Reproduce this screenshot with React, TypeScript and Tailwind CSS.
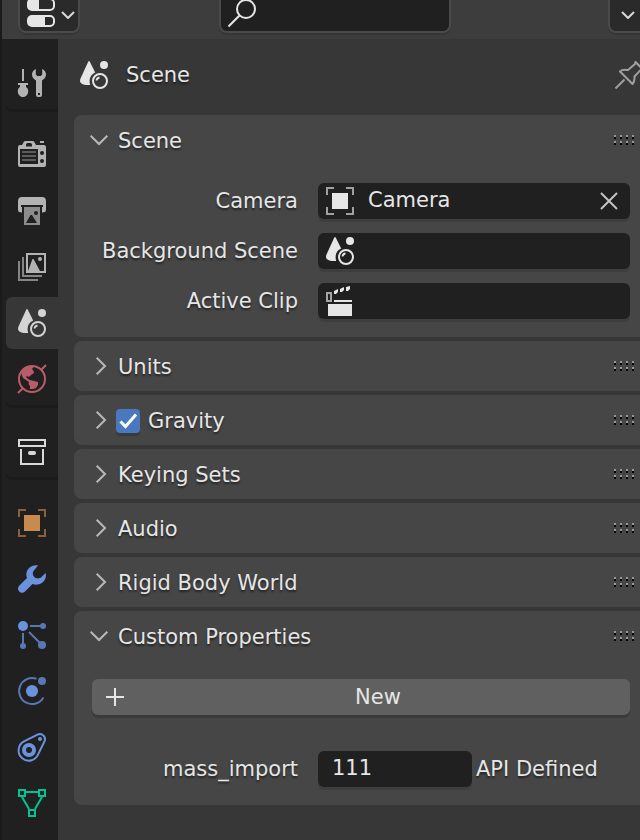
import { useState, type ReactNode } from "react";

const iconBox = "block h-7 w-7 shrink-0 overflow-visible";

function SceneIcon() {
  return (
    <svg viewBox="0 0 28 28" className={iconBox} fill="currentColor" aria-hidden="true">
      <path d="M8.300 0.500 Q9 -0.300 9.700 0.500 L15.200 11.400 C11.400 13 9.600 16 9.600 20 Q9.600 22 10.200 24 C6.500 24.300 3.500 24 1.500 22.600 C-0.300 21.200 -0.200 19.200 0.500 17.500 Z" />
      <circle cx="24" cy="4" r="4" />
      <circle cx="20" cy="20" r="7" fill="none" stroke="currentColor" strokeWidth="2" />
      <path d="M16.500 19.500 A3.500 3.500 0 0 1 19.500 16.500" fill="none" stroke="currentColor" strokeWidth="1.800" />
    </svg>
  );
}

function ToolIcon() {
  return (
    <svg viewBox="0 0 28 28" className={iconBox} fill="#b3b3b3" aria-hidden="true">
      <path d="M4 0h2v12h-2z M0 14h10v2h-2v2c1.600 1 2.200 2.400 2.200 4.200c0 3.200-2.200 5.800-5.200 5.800s-5.200-2.600-5.200-5.800c0-1.800 0.600-3.200 2.200-4.200v-2h-2z" />
      <path
        fillRule="evenodd"
        d="M17.800 0 C15.400 1 14 3.200 14 5.600 C14 8.200 15.600 10.400 18 11.400 V26 Q18 28 20 28 H22 Q24 28 24 26 V11.400 C26.400 10.400 28 8.200 28 5.600 C28 3.200 26.600 1 24.200 0 V5.400 L22.800 7 H19.200 L17.800 5.400 Z M20 24h2v2h-2z"
      />
    </svg>
  );
}

function RenderIcon() {
  return (
    <svg viewBox="0 0 28 28" className={iconBox} aria-hidden="true">
      <path
        fill="#b3b3b3"
        fillRule="evenodd"
        d="M0 6 Q0 4 2 4 H4 L6 0.500 Q6.500 0 7.500 0 H14.500 Q15.500 0 16 0.500 L18 4 H26 Q28 4 28 6 V24 Q28 26 26 26 H2 Q0 26 0 24 Z M9 2 L8 3.500 V5.500 H14 V3.500 L13 2 Z M2 8 V23 H20 V8 Z"
      />
      <path fill="#b3b3b3" d="M22 0h4v2h-4z" />
      <path fill="#5c5c5c" d="M4 10h14v2h-14z M4 14h14v2h-14z M4 18h14v2h-14z" />
      <circle cx="24" cy="12" r="2" fill="#202020" />
      <circle cx="24" cy="20" r="2" fill="#202020" />
    </svg>
  );
}

function OutputIcon() {
  return (
    <svg viewBox="0 0 28 28" className={iconBox} aria-hidden="true">
      <path
        fill="#b3b3b3"
        d="M4 0 H24 Q28 0 28 4 V13 Q28 15.500 24 15.500 V10 H25 V8 H3 V10 H4 V15.500 Q0 15.500 0 13 V4 Q0 0 4 0 Z"
      />
      <path
        fill="#8c8c8c"
        fillRule="evenodd"
        d="M6 10h16v18h-16z M8 26 H19 L14 18 H12.500 Z"
      />
      <circle cx="18" cy="16" r="2" fill="#202020" />
    </svg>
  );
}

function ViewLayerIcon() {
  return (
    <svg viewBox="0 0 28 28" className={iconBox} aria-hidden="true">
      <path d="M9 1h18v18h-18z" fill="none" stroke="#b3b3b3" strokeWidth="2" />
      <path d="M10 18 L14.500 6 H15.500 L22 18 Z" fill="#b3b3b3" />
      <circle cx="22" cy="6" r="2" fill="#b3b3b3" />
      <path d="M5 4v19h19 M1 8v19h19" fill="none" stroke="#858585" strokeWidth="2" />
    </svg>
  );
}

function WorldIcon() {
  return (
    <svg viewBox="0 0 28 28" className={iconBox} aria-hidden="true">
      <circle cx="14" cy="14" r="13" fill="none" stroke="#b95c6a" strokeWidth="2" />
      <path d="M23.500 4.500 L28 0 M4.500 23.500 L0 28" stroke="#b95c6a" strokeWidth="2" />
      <path
        fill="#b95c6a"
        d="M6 4 C9 1 13 1 15.500 2 L14 4 L15.500 6 L16 8 L13 10 L11 12 L9 11 L8 12 L10 14 L12 15 L16 16 L20 17 L20 20 L18 23 L15 24 L12 24 L12 21 L10.500 19 L11 17 L8 15 L5 13 L3 8 Z"
      />
    </svg>
  );
}

function CollectionIcon() {
  return (
    <svg viewBox="0 0 28 28" className={iconBox} aria-hidden="true">
      <path d="M1 3h26v6h-26z M3 12v15h22v-15" fill="none" stroke="#d9d9d9" strokeWidth="2" />
      <rect x="10" y="14" width="8" height="4" rx="2" fill="#d9d9d9" />
    </svg>
  );
}

function ObjectIcon({ square, corners }: { square: string; corners: string }) {
  return (
    <svg viewBox="0 0 28 28" className={iconBox} aria-hidden="true">
      <path d="M8 1h-7v7 M20 1h7v7 M1 20v7h7 M27 20v7h-7" fill="none" stroke={corners} strokeWidth="2" />
      <path d="M6 6h16v16h-16z" fill={square} />
    </svg>
  );
}

function ModifierIcon() {
  return (
    <svg viewBox="0 0 28 28" className={iconBox} aria-hidden="true">
      <path
        fill="#6b93dd"
        d="M20 0.500 C15 -0.500 9.500 2.500 8.500 8 C8.200 9.800 8.400 11.400 9 13 L1.200 20.800 C-0.400 22.400 -0.400 25 1.200 26.600 C2.800 28.200 5.400 28.200 7 26.600 L14.500 19 C19.500 21 25.500 18.500 27.400 13.500 C28 11.600 28.200 9.600 27.600 8 L23.500 12 C22 13.500 19.500 13.800 17.800 13 C15 11.600 14 8.500 15.500 6 Z"
      />
    </svg>
  );
}

function ParticlesIcon() {
  return (
    <svg viewBox="0 0 28 28" className={iconBox} aria-hidden="true">
      <path d="M12 5h12 M5 12v12 M11 11l13 13" stroke="#5877b4" strokeWidth="2" />
      <circle cx="5" cy="5" r="5" fill="#6b93dd" />
      <circle cx="25" cy="5" r="3" fill="#5877b4" />
      <circle cx="5" cy="25" r="3" fill="#5877b4" />
      <circle cx="24" cy="24" r="4" fill="#5877b4" />
    </svg>
  );
}

function PhysicsIcon() {
  return (
    <svg viewBox="0 0 28 28" className={iconBox} aria-hidden="true">
      <path d="M18.500 1.800 A13 13 0 1 0 25.400 20.500" fill="none" stroke="#5877b4" strokeWidth="2" />
      <circle cx="14" cy="14" r="6" fill="#6b93dd" />
      <circle cx="24" cy="4" r="4" fill="#5877b4" />
    </svg>
  );
}

function ConstraintIcon() {
  return (
    <svg viewBox="0 0 28 28" className={iconBox} aria-hidden="true">
      <path
        d="M6 8.400 L19.500 1.600 C23.500 -0.200 28 3.200 26.800 7.600 L20.500 20.500 A10.200 10.200 0 1 1 6 8.400 Z"
        fill="none"
        stroke="#6b93dd"
        strokeWidth="2"
      />
      <circle cx="11" cy="17" r="5" fill="none" stroke="#6b93dd" strokeWidth="4" />
      <circle cx="22" cy="6" r="2" fill="#6b93dd" />
    </svg>
  );
}

function MeshIcon() {
  return (
    <svg viewBox="0 0 28 28" className={iconBox} fill="none" stroke="#00c492" strokeWidth="2" aria-hidden="true">
      <path d="M1 1h6v6h-6z M21 1h6v6h-6z M11 21h6v6h-6z M8 3h12 M4 8l7 12 M24 8l-7 12" />
    </svg>
  );
}

function ClipIcon() {
  return (
    <svg viewBox="0 0 28 30" className="block h-[30px] w-7 shrink-0" aria-hidden="true">
      <path d="M1 7h4v8h-4z" fill="none" stroke="#a6a6a6" strokeWidth="2" />
      <path
        fill="#e6e6e6"
        d="M8 5l4-2v3l-2 2h-2z M14 3l4-2v3l-2 2h-2z M20 1l4-1v3l-2 2h-2z M8 14h18v2h-18z M2 18h24v12h-24z"
      />
    </svg>
  );
}

function PinIcon() {
  return (
    <svg viewBox="0 0 28 28" className={iconBox} fill="none" stroke="#a0a0a0" strokeWidth="2" strokeLinejoin="round" aria-hidden="true">
      <path d="M0.500 27.500 L9.500 18.500 M20.500 1 L27 7.500 L19.500 15.500 C19.500 18 20 20 17.500 23 L5 10.500 C7.500 8 10.500 9 13 9 L20 3 Z" />
    </svg>
  );
}

function Caret() {
  return (
    <svg viewBox="0 0 14 8" className="block h-2 w-3.5" fill="none" stroke="#d9d9d9" strokeWidth="2" aria-hidden="true">
      <path d="M1 1l6 6l6 -6" />
    </svg>
  );
}

function Grip() {
  const cells = [0, 6, 12, 18].flatMap((x) => [0, 6].map((y) => ({ x, y })));
  return (
    <svg viewBox="0 0 20 10" className="ml-auto block h-2.5 w-5 shrink-0" aria-hidden="true">
      {cells.map(({ x, y }) => (
        <g key={`${x}-${y}`}>
          <rect x={x} y={y} width="2" height="2" fill="#9a9a9a" />
          <rect x={x} y={y + 2} width="2" height="2" fill="#000" />
        </g>
      ))}
    </svg>
  );
}

const tabGroups: { name: string; icon: ReactNode }[][] = [
  [{ name: "Tool", icon: <ToolIcon /> }],
  [
    { name: "Render", icon: <RenderIcon /> },
    { name: "Output", icon: <OutputIcon /> },
    { name: "View Layer", icon: <ViewLayerIcon /> },
    { name: "Scene", icon: <SceneIcon /> },
    { name: "World", icon: <WorldIcon /> },
  ],
  [{ name: "Collection", icon: <CollectionIcon /> }],
  [
    { name: "Object", icon: <ObjectIcon square="#c98a50" corners="#8b603e" /> },
    { name: "Modifiers", icon: <ModifierIcon /> },
    { name: "Particles", icon: <ParticlesIcon /> },
    { name: "Physics", icon: <PhysicsIcon /> },
    { name: "Constraints", icon: <ConstraintIcon /> },
    { name: "Data", icon: <MeshIcon /> },
  ],
];

function Panel({
  title,
  leading,
  children,
}: {
  title: string;
  leading?: ReactNode;
  children?: ReactNode;
}) {
  const open = Boolean(children);
  return (
    <section className="rounded-l-lg bg-[#464646]">
      <div className="flex h-[50px] items-center pr-1.5 pl-4">
        <button
          type="button"
          aria-label={`Toggle ${title}`}
          aria-expanded={open}
          className={leading ? "mr-2" : "mr-2.5"}
        >
          <svg viewBox="0 0 18 18" className="block h-[18px] w-[18px]" fill="none" stroke="#b8b8b8" strokeWidth="2" aria-hidden="true">
            <path d={open ? "M0.700 4.700l8.300 8.300l8.300 -8.300" : "M6.700 0.700l8.300 8.300l-8.300 8.300"} />
          </svg>
        </button>
        {leading ?? <h2 className="pt-0.5">{title}</h2>}
        <Grip />
      </div>
      {children && <div className="py-[18px] pr-2.5 pl-[18px]">{children}</div>}
    </section>
  );
}

const rowClass = "grid grid-cols-[206fr_312fr] items-center gap-5";
const fieldClass =
  "flex h-9 min-w-0 items-center rounded-md bg-[#202020] shadow-[0_3px_0_#3e3e3e]";
const inputClass = "h-9 min-w-0 flex-1 bg-transparent pb-0.5 outline-none";

function DataRow({
  id,
  label,
  value = "",
  icon,
  clearable,
}: {
  id: string;
  label: string;
  value?: string;
  icon: ReactNode;
  clearable?: boolean;
}) {
  return (
    <div className={rowClass}>
      <label htmlFor={id} className="text-right whitespace-nowrap">
        {label}
      </label>
      <div className={`${fieldClass} gap-3.5 px-2`}>
        {icon}
        <input id={id} type="text" defaultValue={value} className={inputClass} />
        {clearable && (
          <button type="button" aria-label={`Clear ${label}`} className="pr-1">
            <svg viewBox="0 0 18 18" className="block h-[18px] w-[18px]" stroke="#c4c4c4" strokeWidth="2" aria-hidden="true">
              <path d="M1 1l16 16 M17 1l-16 16" />
            </svg>
          </button>
        )}
      </div>
    </div>
  );
}

export default function App() {
  const [gravity, setGravity] = useState(true);
  const [active, setActive] = useState("Scene");

  return (
    <div className="flex min-h-screen flex-col border-l-2 border-[#1a1a1a] bg-[#373737] font-['DejaVu_Sans',sans-serif] text-[21px] leading-7 text-[#e6e6e6] [text-shadow:0_2px_2px_rgba(0,0,0,0.5)]">
      <header className="flex h-[39px] items-start bg-[#3d3d3d] pl-4">
        <button
          type="button"
          aria-label="Editor type"
          className="flex h-[33px] w-[62px] shrink-0 gap-1.5 overflow-hidden rounded-b-lg border-2 border-t-0 border-[#4a4a4a] bg-[#2a2a2a] pl-[7px] shadow-[0_2px_0_#363636]"
        >
          <svg viewBox="0 0 28 28" className="block h-7 w-7 shrink-0" aria-hidden="true">
            <rect x="1" y="-1" width="26" height="11" rx="4" fill="none" stroke="#e6e6e6" strokeWidth="2" />
            <path d="M4 -1h8v11h-8q-3 0-3-3v-5q0-3 3-3z" fill="#e6e6e6" />
            <rect x="1" y="16" width="26" height="10" rx="4" fill="none" stroke="#e6e6e6" strokeWidth="2" />
            <path d="M4 16h14v10h-14q-3 0-3-3v-4q0-3 3-3z" fill="#e6e6e6" />
          </svg>
          <span className="shrink-0 pt-[11px]">
            <Caret />
          </span>
        </button>
        <label className="ml-[139px] flex h-[33px] w-[232px] min-w-0 rounded-b-lg border-2 border-t-0 border-[#4a4a4a] bg-[#202020] pl-[7px] shadow-[0_2px_0_#363636]">
          <svg viewBox="0 0 28 28" className="block h-7 w-7 shrink-0" fill="none" stroke="#e6e6e6" strokeWidth="2" aria-hidden="true">
            <circle cx="18" cy="9" r="9" />
            <path d="M11.500 15.500L0.500 26.500" />
          </svg>
          <input type="search" aria-label="Search" className="h-7 min-w-0 flex-1 bg-transparent outline-none" />
        </label>
        <button
          type="button"
          aria-label="Options"
          className="ml-auto flex h-[33px] w-8 shrink-0 justify-end rounded-bl-lg border-b-2 border-l-2 border-[#4a4a4a] bg-[#2a2a2a] pt-[11px] pr-[5px] shadow-[0_2px_0_#363636]"
        >
          <Caret />
        </button>
      </header>

      <div className="flex flex-1">
        <nav aria-label="Properties tabs" className="flex w-14 shrink-0 flex-col gap-5 bg-[#202020] pt-[18px] pl-1">
          {tabGroups.map((group) => (
            <div
              key={group[0].name}
              className="flex flex-col gap-1 rounded-bl-md shadow-[0_3px_0_#1b1b1b] last:shadow-none"
            >
              {group.map((tab) => (
                <button
                  key={tab.name}
                  type="button"
                  aria-label={tab.name}
                  onClick={() => setActive(tab.name)}
                  className={`flex h-[52px] items-center justify-center rounded-l-md text-[#d4d4d4] ${
                    tab.name === active ? "bg-[#373737]" : "bg-[#202020]"
                  }`}
                >
                  {tab.icon}
                </button>
              ))}
            </div>
          ))}
        </nav>

        <main className="min-w-0 flex-1 pl-4">
          <div className="flex h-[76px] items-center pb-1 pl-1.5">
            <SceneIcon />
            <h1 className="ml-[18px]">Scene</h1>
            <button type="button" aria-label="Pin" className="ml-auto w-[25px] shrink-0 overflow-hidden">
              <PinIcon />
            </button>
          </div>

          <div className="flex flex-col gap-1">
            <Panel title="Scene">
              <div className="flex flex-col gap-3.5">
                <DataRow
                  id="camera"
                  label="Camera"
                  value="Camera"
                  icon={<ObjectIcon square="#e6e6e6" corners="#a0a0a0" />}
                  clearable
                />
                <DataRow id="background-scene" label="Background Scene" icon={<SceneIcon />} />
                <DataRow id="active-clip" label="Active Clip" icon={<ClipIcon />} />
              </div>
            </Panel>
            <Panel title="Units" />
            <Panel
              title="Gravity"
              leading={
                <label className="flex items-center gap-2 pt-0.5">
                  <span className="grid h-6 w-6 rounded bg-[#4a78bf] shadow-[0_3px_0_#3a3a3a]">
                    <input
                      type="checkbox"
                      checked={gravity}
                      onChange={(e) => setGravity(e.target.checked)}
                      className="col-start-1 row-start-1 h-6 w-6 appearance-none"
                    />
                    {gravity && (
                      <svg viewBox="0 0 24 24" className="pointer-events-none col-start-1 row-start-1 block h-6 w-6" fill="none" stroke="#fff" strokeWidth="3" aria-hidden="true">
                        <path d="M4.500 12.500L9.500 17.500L20 5.500" />
                      </svg>
                    )}
                  </span>
                  Gravity
                </label>
              }
            />
            <Panel title="Keying Sets" />
            <Panel title="Audio" />
            <Panel title="Rigid Body World" />
            <Panel title="Custom Properties">
              <div className="flex flex-col gap-9">
                <button
                  type="button"
                  className="flex h-9 items-center gap-0.5 rounded-md bg-[#606060] pl-3.5 shadow-[0_3px_0_#3a3a3a]"
                >
                  <svg viewBox="0 0 18 18" className="block h-[18px] w-[18px] shrink-0" stroke="#e6e6e6" strokeWidth="2" aria-hidden="true">
                    <path d="M9 0v18 M0 9h18" />
                  </svg>
                  <span className="flex-1 text-center">New</span>
                </button>
                <div className={rowClass}>
                  <label htmlFor="mass-import" className="text-right">
                    mass_import
                  </label>
                  <div className="grid grid-cols-2 items-center gap-1">
                    <div className={`${fieldClass} px-3.5`}>
                      <input id="mass-import" type="text" defaultValue="111" className={inputClass} />
                    </div>
                    <span className="whitespace-nowrap">API Defined</span>
                  </div>
                </div>
              </div>
            </Panel>
          </div>
        </main>
      </div>
    </div>
  );
}
